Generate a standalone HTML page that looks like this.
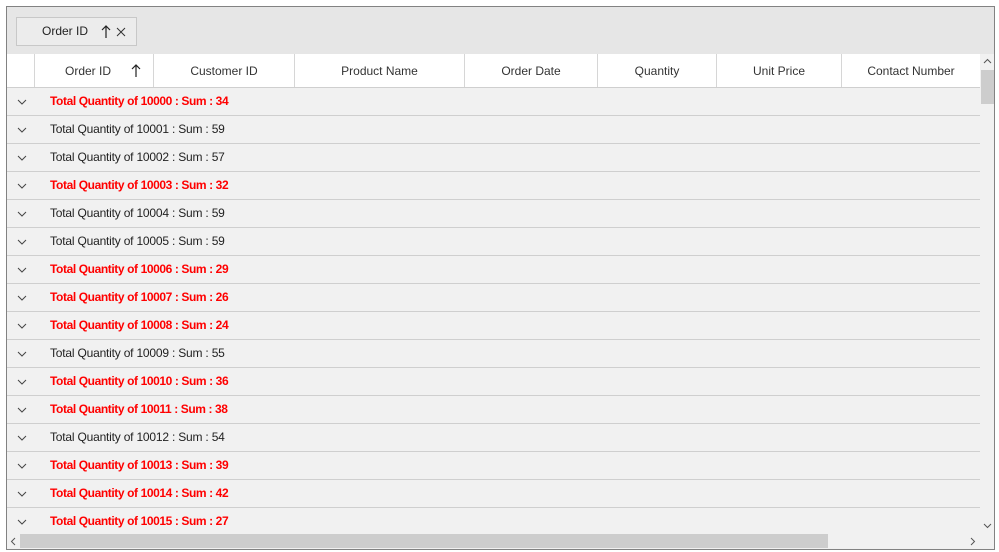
<!DOCTYPE html>
<html><head><style>
body{margin:0;width:999px;height:552px;background:#fff;font-family:"Liberation Sans",sans-serif;font-size:12px;position:relative;overflow:hidden}
.frame{position:absolute;left:6px;top:6px;width:987px;height:542px;border:1px solid #828282;background:#f1f1f1;overflow:hidden}
.top{position:absolute;left:0;top:0;width:987px;height:47px;background:#e6e6e6}
.chip{position:absolute;left:9px;top:10px;width:119px;height:27px;border:1px solid #c8c8c8;background:#ececec;color:#222}
.hdr{position:absolute;left:0;top:47px;width:973px;height:33px;background:#fff;border-bottom:1px solid #cfcfcf}
.hc{position:absolute;top:0;height:33px;line-height:35px;text-align:center;color:#333;border-right:1px solid #d6d6d6}
.row{position:absolute;left:0;width:973px;height:27px;border-bottom:1px solid #cfcfcf;line-height:27px}
.row .t{position:absolute;left:43px;color:#222;letter-spacing:-0.2px}
.row .t.r{color:#f00;font-weight:bold;letter-spacing:-0.4px}
.chev{position:absolute;left:10px;top:11px}
.vs{position:absolute;left:973px;top:47px;width:14px;height:479px;background:#f1f1f1}
.hs{position:absolute;left:0;top:526px;width:973px;height:16px;background:#f1f1f1}
</style></head><body>
<div class="frame">
<div class="top"><div class="chip"><span style="position:absolute;left:25px;top:6px">Order ID</span>
<svg style="position:absolute;left:84px;top:7px" width="28" height="14"><path d="M5 1V13M1 5L5 1L9 5" stroke="#222" fill="none" stroke-width="1.2"/><path d="M16 3L24 11M24 3L16 11" stroke="#333" fill="none" stroke-width="1"/></svg></div></div>
<div class="hdr">
<div class="hc" style="left:0;width:27px"></div>
<div class="hc" style="left:28px;width:118px"><span style="position:relative;left:-6px">Order ID</span><svg style="position:absolute;left:96px;top:10px" width="10" height="14"><path d="M5 1V13M1 5L5 1L9 5" stroke="#222" fill="none" stroke-width="1.2"/></svg></div>
<div class="hc" style="left:147px;width:140px">Customer ID</div>
<div class="hc" style="left:288px;width:169px">Product Name</div>
<div class="hc" style="left:458px;width:132px">Order Date</div>
<div class="hc" style="left:591px;width:118px">Quantity</div>
<div class="hc" style="left:710px;width:124px">Unit Price</div>
<div class="hc" style="left:835px;width:138px;border:none">Contact Number</div>
</div>
<div id="rows"></div>
<div class="vs"><svg style="position:absolute;left:3px;top:4px" width="9" height="6"><path d="M1 5L4.5 1.5L8 5" stroke="#555" fill="none"/></svg>
<div style="position:absolute;left:1px;top:16px;width:13px;height:34px;background:#cdcdcd"></div>
<svg style="position:absolute;left:3px;top:469px" width="9" height="6"><path d="M1 1L4.5 4.5L8 1" stroke="#555" fill="none"/></svg></div>
<div class="hs"><svg style="position:absolute;left:3px;top:4px" width="6" height="9"><path d="M5 1L1.5 4.5L5 8" stroke="#555" fill="none"/></svg>
<div style="position:absolute;left:13px;top:1px;width:808px;height:14px;background:#cdcdcd"></div>
<svg style="position:absolute;left:963px;top:4px" width="6" height="9"><path d="M1 1L4.5 4.5L1 8" stroke="#555" fill="none"/></svg></div>
<div style="position:absolute;left:973px;top:526px;width:14px;height:16px;background:#f1f1f1"></div>
</div>
<script>
var d=[[34,1],[59,0],[57,0],[32,1],[59,0],[59,0],[29,1],[26,1],[24,1],[55,0],[36,1],[38,1],[54,0],[39,1],[42,1],[27,1]];
var h='';d.forEach(function(v,i){h+='<div class="row" style="top:'+(81+i*28)+'px"><svg class="chev" width="10" height="6"><path d="M1 1L5 5L9 1" stroke="#444" fill="none"/></svg><span class="t'+(v[1]?' r':'')+'">Total Quantity of '+(10000+i)+' : Sum : '+v[0]+'</span></div>';});
document.getElementById('rows').innerHTML=h;
</script>
</body></html>
